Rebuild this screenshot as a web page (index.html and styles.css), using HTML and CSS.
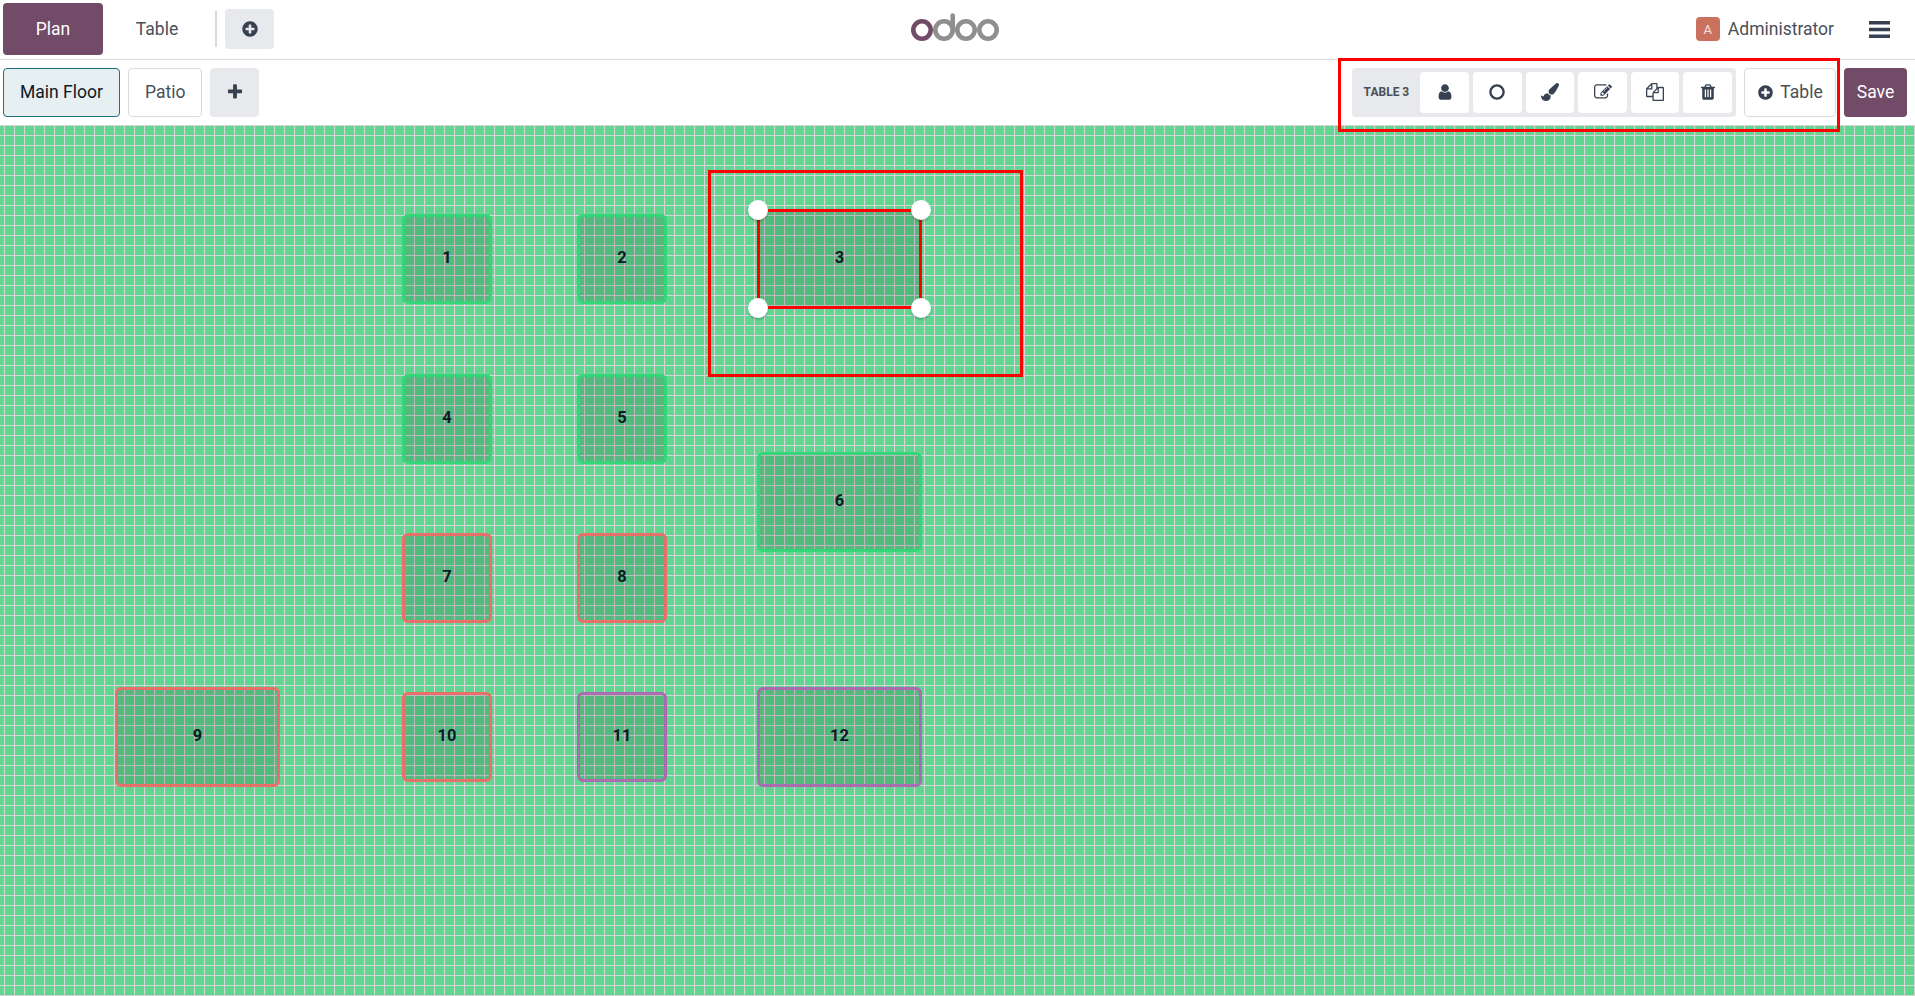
FILE: index.html
```html
<!DOCTYPE html>
<html lang="en">
<head>
  <meta charset="UTF-8">
  <title>Odoo POS - Floor Plan</title>
  <link rel="stylesheet" href="styles.css">
</head>
<body>
  <!-- Top navigation -->
  <header class="topbar">
    <div class="topbar-left">
      <button class="btn-plan">Plan</button>
      <button class="btn-text">Table</button>
      <span class="topbar-sep"></span>
      <button class="btn-light btn-new">
        <svg class="icon icon-lg" viewBox="0 0 1792 1792"><path d="M1344 960v-128q0-26-19-45t-45-19h-256v-256q0-26-19-45t-45-19h-128q-26 0-45 19t-19 45v256h-256q-26 0-45 19t-19 45v128q0 26 19 45t45 19h256v256q0 26 19 45t45 19h128q26 0 45-19t19-45v-256h256q26 0 45-19t19-45zm320-64q0 209-103 385.5t-279.5 279.5-385.5 103-385.5-103-279.5-279.5-103-385.5 103-385.5 279.5-279.5 385.5-103 385.5 103 279.5 279.5 103 385.5z"/></svg>
      </button>
    </div>
    <svg class="logo" viewBox="0 0 100 44">
      <circle class="logo-purple" cx="14" cy="20" r="8.7"/>
      <circle class="logo-grey" cx="36" cy="20" r="8.7"/>
      <circle class="logo-grey" cx="58" cy="20" r="8.7"/>
      <circle class="logo-grey" cx="80" cy="20" r="8.7"/>
      <path class="logo-grey" d="M44.7 20V5.5"/>
    </svg>
    <div class="topbar-right">
      <span class="avatar">A</span>
      <span class="user-name">Administrator</span>
      <svg class="icon icon-bars" viewBox="192 256 1408 1280" preserveAspectRatio="none"><path d="M1664 1344v128q0 26-19 45t-45 19h-1408q-26 0-45-19t-19-45v-128q0-26 19-45t45-19h1408q26 0 45 19t19 45zm0-512v128q0 26-19 45t-45 19h-1408q-26 0-45-19t-19-45v-128q0-26 19-45t45-19h1408q26 0 45 19t19 45zm0-512v128q0 26-19 45t-45 19h-1408q-26 0-45-19t-19-45v-128q0-26 19-45t45-19h1408q26 0 45 19t19 45z"/></svg>
    </div>
  </header>

  <!-- Floor tabs and edit tools -->
  <div class="subbar">
    <div class="floor-tabs">
      <button class="floor-tab active">Main Floor</button>
      <button class="floor-tab">Patio</button>
      <button class="btn-light btn-add">
        <svg class="icon icon-lg" viewBox="0 0 1792 1792"><path d="M1600 736v192q0 40-28 68t-68 28h-416v416q0 40-28 68t-68 28h-192q-40 0-68-28t-28-68v-416h-416q-40 0-68-28t-28-68v-192q0-40 28-68t68-28h416v-416q0-40 28-68t68-28h192q40 0 68 28t28 68v416h416q40 0 68 28t28 68z"/></svg>
      </button>
    </div>
    <div class="tools">
      <div class="tool-group">
        <span class="tool-label">TABLE 3</span>
        <button class="tool-btn">
          <svg class="icon icon-lg" viewBox="0 0 1792 1792"><path d="M1536 1399q0 109-62.5 187t-150.5 78h-854q-88 0-150.5-78t-62.5-187q0-85 8.5-160.5t31.5-152 58.5-131 94-89 134.5-34.5q131 128 313 128t313-128q76 0 134.5 34.5t94 89 58.5 131 31.5 152 8.5 160.5zm-256-887q0 159-112.5 271.5t-271.5 112.5-271.5-112.5-112.5-271.5 112.5-271.5 271.5-112.5 271.5 112.5 112.5 271.5z"/></svg>
        </button>
        <button class="tool-btn">
          <svg class="icon icon-ring" viewBox="0 0 16 16"><circle cx="8" cy="8" r="6.6"/></svg>
        </button>
        <button class="tool-btn">
          <svg class="icon icon-lg" viewBox="0 0 1792 1792"><path d="M1615 0q70 0 122.5 46.5t52.5 116.5q0 63-45 151-332 629-465 752-97 91-218 91-126 0-216.5-92.5t-90.5-219.5q0-128 92-212l638-579q59-54 130-54zm-909 1034q39 76 106.5 130t150.5 76l1 71q4 213-129.5 347t-348.5 134q-123 0-218-46.5t-152.5-127.5-86.5-183-29-220q7 5 41 30t62 44.5 59 36.5 46 17q41 0 55-37 25-66 57.5-112.5t69.5-76 88-47.5 103-25.5 125-10.5z"/></svg>
        </button>
        <button class="tool-btn">
          <svg class="icon icon-lg" viewBox="0 0 1792 1792"><path d="M888 1184l116-116-152-152-116 116v56h96v96h56zm440-720q-16-16-33 1l-350 350q-17 17-1 33t33-1l350-350q17-17 1-33zm80 594v190q0 119-84.5 203.5t-203.5 84.5h-832q-119 0-203.5-84.5t-84.5-203.5v-832q0-119 84.5-203.5t203.5-84.5h832q63 0 117 25 15 7 18 23 3 17-9 29l-49 49q-14 14-32 8-23-6-45-6h-832q-66 0-113 47t-47 113v832q0 66 47 113t113 47h832q66 0 113-47t47-113v-126q0-13 9-22l64-64q15-15 35-7t20 29zm-96-738l288 288-672 672h-288v-288zm444 132l-92 92-288-288 92-92q28-28 68-28t68 28l152 152q28 28 28 68t-28 68z"/></svg>
        </button>
        <button class="tool-btn">
          <svg class="icon icon-lg" viewBox="0 0 1792 1792"><path d="M1696 384q40 0 68 28t28 68v1216q0 40-28 68t-68 28h-960q-40 0-68-28t-28-68v-288h-544q-40 0-68-28t-28-68v-672q0-40 20-88t48-76l408-408q28-28 76-48t88-20h416q40 0 68 28t28 68v328q68-40 128-40h416zm-544 213l-299 299h299v-299zm-640-384l-299 299h299v-299zm196 647l316-316v-416h-384v416q0 40-28 68t-68 28h-416v640h512v-256q0-40 20-88t48-76zm956 804v-1152h-384v416q0 40-28 68t-68 28h-416v640h896z"/></svg>
        </button>
        <button class="tool-btn">
          <svg class="icon icon-lg" viewBox="0 0 1792 1792"><path d="M704 1376v-704q0-14-9-23t-23-9h-64q-14 0-23 9t-9 23v704q0 14 9 23t23 9h64q14 0 23-9t9-23zm256 0v-704q0-14-9-23t-23-9h-64q-14 0-23 9t-9 23v704q0 14 9 23t23 9h64q14 0 23-9t9-23zm256 0v-704q0-14-9-23t-23-9h-64q-14 0-23 9t-9 23v704q0 14 9 23t23 9h64q14 0 23-9t9-23zm-544-992h448l-48-117q-7-9-17-11h-317q-10 2-17 11zm928 32v64q0 14-9 23t-23 9h-96v948q0 83-47 143.5t-113 60.5h-832q-66 0-113-58.5t-47-141.5v-952h-96q-14 0-23-9t-9-23v-64q0-14 9-23t23-9h309l70-167q15-37 54-63t79-26h320q40 0 79 26t54 63l70 167h309q14 0 23 9t9 23z"/></svg>
        </button>
      </div>
      <button class="btn-add-table">
        <svg class="icon icon-md" viewBox="0 0 1792 1792"><path d="M1344 960v-128q0-26-19-45t-45-19h-256v-256q0-26-19-45t-45-19h-128q-26 0-45 19t-19 45v256h-256q-26 0-45 19t-19 45v128q0 26 19 45t45 19h256v256q0 26 19 45t45 19h128q26 0 45-19t19-45v-256h256q26 0 45-19t19-45zm320-64q0 209-103 385.5t-279.5 279.5-385.5 103-385.5-103-279.5-279.5-103-385.5 103-385.5 279.5-279.5 385.5-103 385.5 103 279.5 279.5 103 385.5z"/></svg>
        Table
      </button>
      <button class="btn-save">Save</button>
    </div>
  </div>

  <!-- Floor plan canvas -->
  <main class="floor">
    <div class="table table-1 free"><span>1</span></div>
    <div class="table table-2 free"><span>2</span></div>
    <div class="table table-3 selected">
      <span>3</span>
      <i class="handle handle-tl"></i>
      <i class="handle handle-tr"></i>
      <i class="handle handle-bl"></i>
      <i class="handle handle-br"></i>
    </div>
    <div class="table table-4 free"><span>4</span></div>
    <div class="table table-5 free"><span>5</span></div>
    <div class="table table-6 free"><span>6</span></div>
    <div class="table table-7 busy"><span>7</span></div>
    <div class="table table-8 busy"><span>8</span></div>
    <div class="table table-9 busy"><span>9</span></div>
    <div class="table table-10 busy"><span>10</span></div>
    <div class="table table-11 held"><span>11</span></div>
    <div class="table table-12 held"><span>12</span></div>
    <div class="callout callout-table"></div>
  </main>

  <div class="callout callout-tools"></div>
</body>
</html>
```

FILE: styles.css
```css
/* Global */
* {
  margin: 0;
  padding: 0;
  box-sizing: border-box;
}

html,
body {
  height: 100%;
  overflow: hidden;
}

body {
  display: flex;
  flex-direction: column;
  position: relative;
  font-family: Roboto, sans-serif;
  font-size: 17.5px;
  color: #4a4f59;
  background-color: #ffffff;
}

button {
  font: inherit;
  color: inherit;
  border: 0;
  background: none;
  display: flex;
  align-items: center;
  justify-content: center;
}

.icon {
  width: 16px;
  height: 16px;
  fill: #374151;
  display: block;
}

.icon-md {
  width: 17px;
  height: 17px;
}

.icon-lg {
  width: 18px;
  height: 18px;
}

/* Top navigation */
.topbar {
  height: 60px;
  flex: none;
  display: flex;
  align-items: center;
  padding-bottom: 1px;
  border-bottom: 1px solid #d8dadd;
}

.topbar-left,
.topbar-right {
  flex: 1 1 0;
  display: flex;
  align-items: center;
}

.topbar-right {
  justify-content: flex-end;
}

.btn-plan {
  width: 100px;
  height: 52px;
  margin-left: 3px;
  border-radius: 4px;
  background-color: #714b67;
  color: #ffffff;
}

.btn-text {
  width: 108px;
  height: 52px;
}

.topbar-sep {
  width: 2px;
  height: 36px;
  margin-left: 4px;
  background-color: #d8dadd;
}

.btn-light {
  border-radius: 4px;
  background-color: #e7e9ed;
}

.btn-new {
  width: 49px;
  height: 40px;
  margin-left: 8px;
}

.logo {
  width: 100px;
  height: 44px;
  flex: none;
  margin-top: 6px;
}

.logo circle,
.logo path {
  fill: none;
  stroke-width: 4.6;
}

.logo-purple {
  stroke: #714b67;
}

.logo-grey {
  stroke: #8f8f8f;
}

.logo path {
  stroke-linecap: round;
}

.avatar {
  width: 24px;
  height: 24px;
  border-radius: 4px;
  background-color: #c9715e;
  color: #f3e3df;
  font-size: 13px;
  display: flex;
  align-items: center;
  justify-content: center;
}

.user-name {
  margin-left: 8px;
  margin-right: 35px;
}

.icon-bars {
  width: 21px;
  height: 17px;
  margin-right: 25px;
}

/* Floor tabs and edit tools */
.subbar {
  height: 65px;
  flex: none;
  display: flex;
  align-items: center;
  justify-content: space-between;
  padding: 0 8px 1px 3px;
}

.floor-tabs,
.tools {
  display: flex;
  align-items: center;
  gap: 8px;
}

.floor-tab {
  height: 49px;
  padding: 0 16px;
  border: 1px solid #d8dadd;
  border-radius: 4px;
  background-color: #ffffff;
}

.floor-tab.active {
  width: 117px;
  border-color: #1f6f80;
  background-color: #e6eff1;
  color: #111827;
}

.btn-add {
  width: 49px;
  height: 49px;
}

.tool-group {
  height: 49px;
  display: flex;
  align-items: center;
  gap: 4px;
  padding: 0 4px;
  border-radius: 4px;
  background-color: #e7e9ed;
}

.tool-label {
  width: 60px;
  text-align: center;
  font-size: 12px;
  font-weight: 700;
  white-space: nowrap;
}

.tool-btn {
  width: 48.6px;
  height: 41px;
  border-radius: 4px;
  background-color: #ffffff;
}

.icon-ring {
  fill: none;
  stroke: #374151;
  stroke-width: 2.4;
}

.btn-add-table {
  width: 92px;
  height: 49px;
  gap: 6px;
  border: 1px solid #d8dadd;
  border-radius: 4px;
}

.btn-save {
  width: 63px;
  height: 49px;
  border-radius: 4px;
  background-color: #714b67;
  color: #ffffff;
}

/* Floor plan canvas */
.floor {
  flex: 1;
  position: relative;
  background-color: #60d690;
  background-image:
    linear-gradient(#d6d6d6 1px, transparent 1px),
    linear-gradient(90deg, #d6d6d6 1px, transparent 1px);
  background-size: 10px 10px;
  background-position: 4px 0;
}

.table {
  position: absolute;
  display: flex;
  align-items: center;
  justify-content: center;
  border: 3px solid;
  border-radius: 6px;
  background-color: rgba(0, 0, 0, 0.13);
  color: #111827;
  font-size: 16.5px;
  font-weight: 700;
}

.table span {
  margin-bottom: 4px;
}

.free {
  border-color: #35d67a;
}

.busy {
  border-color: #e8706a;
}

.held {
  border-color: #aa6bb0;
}

.selected {
  border-color: #ff0000;
  border-radius: 0;
}

/* table positions on the floor */
.table-1 { left: 402px; top: 89px; width: 90px; height: 90px; }
.table-2 { left: 577px; top: 89px; width: 90px; height: 90px; }
.table-3 { left: 757px; top: 84px; width: 165px; height: 100px; }
.table-4 { left: 402px; top: 249px; width: 90px; height: 90px; }
.table-5 { left: 577px; top: 249px; width: 90px; height: 90px; }
.table-6 { left: 757px; top: 327px; width: 165px; height: 100px; }
.table-7 { left: 402px; top: 408px; width: 90px; height: 90px; }
.table-8 { left: 577px; top: 408px; width: 90px; height: 90px; }
.table-9 { left: 115px; top: 562px; width: 165px; height: 100px; }
.table-10 { left: 402px; top: 567px; width: 90px; height: 90px; }
.table-11 { left: 577px; top: 567px; width: 90px; height: 90px; }
.table-12 { left: 757px; top: 562px; width: 165px; height: 100px; }

.handle {
  position: absolute;
  width: 20px;
  height: 20px;
  border-radius: 50%;
  background-color: #ffffff;
  box-shadow: 0 2px 2px rgba(0, 0, 0, 0.18);
}

.handle-tl { left: -12px; top: -12px; }
.handle-tr { right: -12px; top: -12px; }
.handle-bl { left: -12px; bottom: -12px; }
.handle-br { right: -12px; bottom: -12px; }

/* Red annotation boxes */
.callout {
  position: absolute;
  border: 3px solid #ff0000;
  pointer-events: none;
}

.callout-tools {
  left: 1338px;
  top: 58px;
  width: 502px;
  height: 74px;
}

.callout-table {
  left: 708px;
  top: 45px;
  width: 315px;
  height: 207px;
}
```
